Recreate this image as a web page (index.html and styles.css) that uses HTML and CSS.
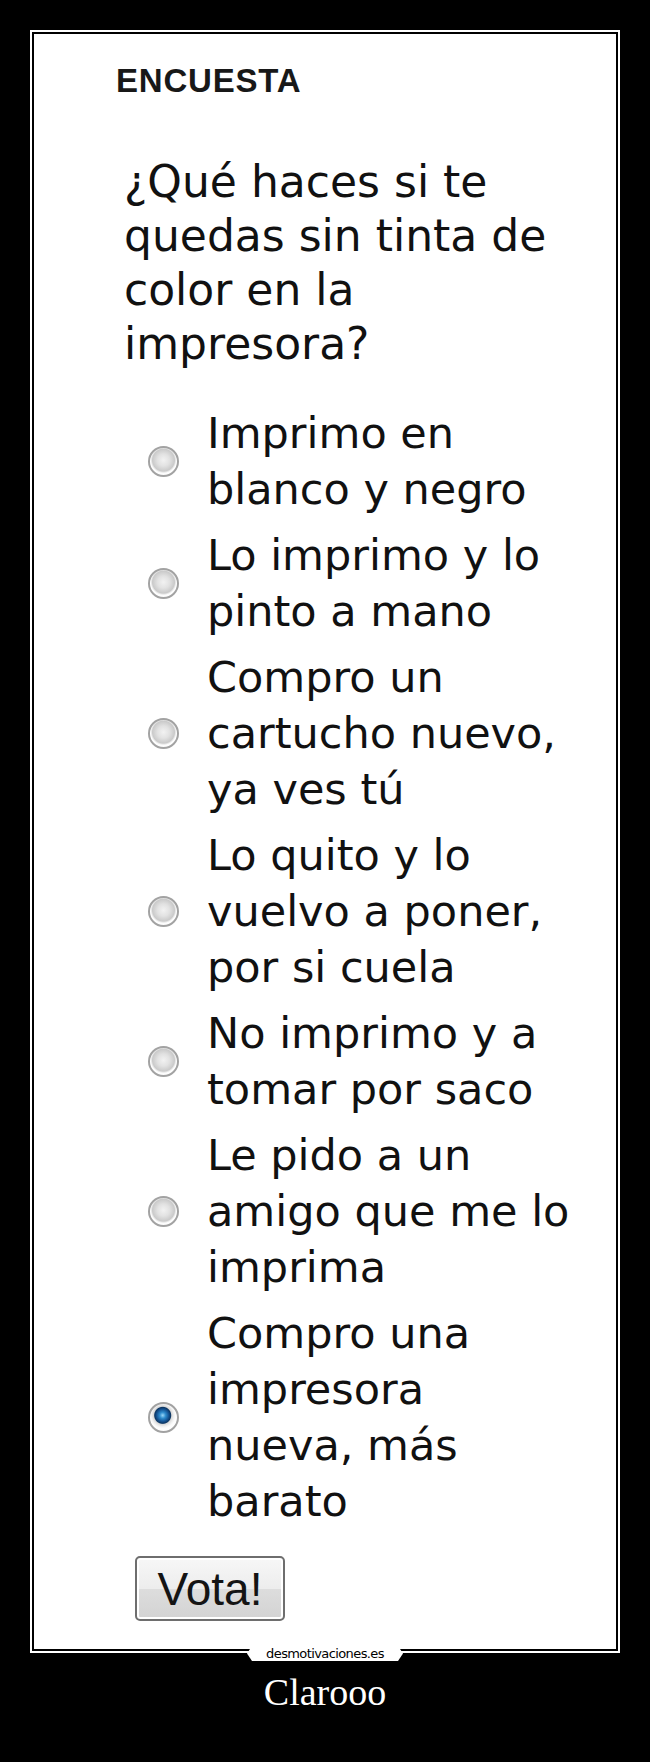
FILE: index.html
```html
<!DOCTYPE html>
<html lang="es">
<head>
    <meta charset="UTF-8">
    <title>Encuesta - Clarooo</title>
    <link rel="stylesheet" href="styles.css">
</head>
<body>
    <div class="poster">
        <!-- Marco con la captura -->
        <div class="frame">
            <div class="panel">
                <h2 class="poll-title">ENCUESTA</h2>
                <p class="question">¿Qué haces si te<br>quedas sin tinta de<br>color en la<br>impresora?</p>

                <form class="poll">
                    <label class="option">
                        <input type="radio" name="tinta">
                        <span>Imprimo en<br>blanco y negro</span>
                    </label>
                    <label class="option">
                        <input type="radio" name="tinta">
                        <span>Lo imprimo y lo<br>pinto a mano</span>
                    </label>
                    <label class="option">
                        <input type="radio" name="tinta">
                        <span>Compro un<br>cartucho nuevo,<br>ya ves tú</span>
                    </label>
                    <label class="option">
                        <input type="radio" name="tinta">
                        <span>Lo quito y lo<br>vuelvo a poner,<br>por si cuela</span>
                    </label>
                    <label class="option">
                        <input type="radio" name="tinta">
                        <span>No imprimo y a<br>tomar por saco</span>
                    </label>
                    <label class="option">
                        <input type="radio" name="tinta">
                        <span>Le pido a un<br>amigo que me lo<br>imprima</span>
                    </label>
                    <label class="option">
                        <input type="radio" name="tinta" checked>
                        <span>Compro una<br>impresora<br>nueva, más<br>barato</span>
                    </label>

                    <button type="button" class="vote">Vota!</button>
                </form>
            </div>
            <div class="site-tag">desmotivaciones.es</div>
        </div>

        <p class="caption">Clarooo</p>
    </div>
</body>
</html>
```

FILE: styles.css
```css
/* Reset */
* {
    margin: 0;
    padding: 0;
    box-sizing: border-box;
}

body {
    background: #000;
    width: 650px;
    height: 1762px;
    overflow: hidden;
}

.poster {
    padding: 30px 30px 0;
}

/* Marco blanco doble */
.frame {
    position: relative;
    border: 2px solid #fff;
    padding: 2px;
    background: #000;
}

.panel {
    background: #fff;
    height: 1615px;
    padding: 30px 0 0 82px;
    font-family: "DejaVu Sans", Verdana, sans-serif;
    color: #111;
}

.poll-title {
    font-family: "Liberation Sans", Arial, sans-serif;
    font-size: 33px;
    font-weight: bold;
    line-height: 33px;
    letter-spacing: 0.8px;
    color: #181818;
}

.question {
    margin-top: 58px;
    padding-left: 8px;
    font-size: 44px;
    line-height: 54px;
}

.poll {
    margin-top: 34px;
}

.option {
    display: flex;
    align-items: center;
    gap: 28px;
    padding-left: 32px;
    margin-bottom: 10px;
    font-size: 43px;
    line-height: 56px;
}

.option input {
    appearance: none;
    -webkit-appearance: none;
    flex: none;
    width: 31px;
    height: 31px;
    border-radius: 50%;
    border: 2px solid #a2a2a2;
    background: radial-gradient(circle at 50% 45%, #f2f2f2 0, #e2e2e2 6px, #cacaca 11px, #e6e6e6 12px, #fdfdfd 13px);
}

.option input:checked {
    background: radial-gradient(circle at 47% 42%, #9ad6f7 0, #2f8ccd 3px, #165595 6px, #0c3663 8px, #d8d8d8 9px, #efefef 11px, #fdfdfd 13px);
}

.vote {
    display: block;
    margin: 27px 0 0 19px;
    width: 150px;
    height: 65px;
    border: 2px solid #6e6e6e;
    border-radius: 5px;
    background: linear-gradient(to bottom, #f7f7f7, #ededed 50%, #dddddd 51%, #d3d3d3);
    box-shadow: inset 0 0 0 2px #fff;
    font-family: "Liberation Sans", Arial, sans-serif;
    font-size: 46px;
    color: #141414;
    cursor: pointer;
}

/* Etiqueta sobre el borde inferior */
.site-tag {
    position: absolute;
    left: 50%;
    bottom: -10px;
    transform: translateX(-50%);
    width: 156px;
    height: 15px;
    background: #fff;
    clip-path: polygon(5px 0, 151px 0, 156px 50%, 151px 100%, 5px 100%, 0 50%);
    font-family: "DejaVu Sans", sans-serif;
    font-size: 13px;
    line-height: 15px;
    letter-spacing: -0.6px;
    text-align: center;
    color: #000;
}

.caption {
    margin-top: 20px;
    font-family: "Liberation Serif", "Times New Roman", serif;
    font-size: 38px;
    line-height: 38px;
    text-align: center;
    color: #fff;
}
```
